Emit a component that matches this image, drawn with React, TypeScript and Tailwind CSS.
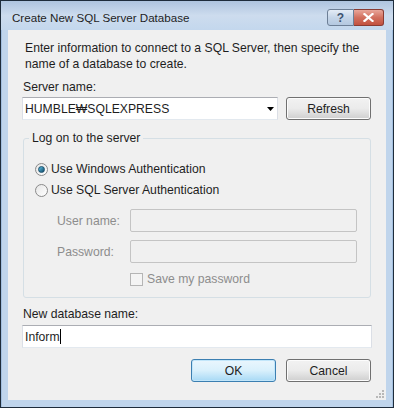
function WinButton({ label, primary }: { label: string; primary?: boolean }) {
  return (
    <button
      className={
        primary
          ? 'h-[23px] w-[85px] rounded-[3px] border border-[#3c7fb1] bg-gradient-to-b from-[#eaf6fd] via-[#d9f0fc] to-[#a7d9f5] text-[12.2px] text-[#1e1e1e] shadow-[inset_0_0_0_1px_#c2e6fa]'
          : 'h-[23px] w-[85px] rounded-[3px] border border-[#707070] bg-gradient-to-b from-[#f2f2f2] via-[#ebebeb] to-[#cfcfcf] text-[12.2px] text-[#1e1e1e] shadow-[inset_0_0_0_1px_#fcfcfc]'
      }
    >
      {label}
    </button>
  );
}

function Radio({ checked }: { checked?: boolean }) {
  return (
    <span className="flex h-[13px] w-[13px] items-center justify-center rounded-full border border-[#8a8a8a] bg-gradient-to-br from-[#e6e6e6] to-[#ffffff]">
      {checked && (
        <span className="h-[7px] w-[7px] rounded-full border border-[#1b4f6b] bg-gradient-to-br from-[#5ec2e8] to-[#0f4a68]" />
      )}
    </span>
  );
}

export default function App() {
  return (
    <div className="h-[408px] w-[394px] bg-[#1e2c3b] p-px font-['Liberation_Sans',sans-serif] text-[12.2px] leading-4 text-[#1e1e1e]">
      <div className="flex h-full flex-col bg-[#c0d5ec] px-[7px] pb-[7px] shadow-[inset_-1px_0_0_#a3bfdf,inset_1px_0_0_#a3bfdf]">
        {/* title bar */}
        <div className="-mx-[7px] flex h-[29px] items-start bg-gradient-to-b from-[#aec4df] via-[#cddcee] to-[#c3d7ed] px-[7px]">
          <span className="ml-[4px] mt-[9px] text-[11.6px] text-[#1e1e1e]">Create New SQL Server Database</span>
          <div className="ml-auto mr-[2px] mt-[8px] flex">
            <div className="flex h-[17px] w-[27px] items-center justify-center rounded-l-[3px] border border-[#6d7f96] bg-gradient-to-b from-[#e4ecf6] via-[#c5d5e8] to-[#b4c8e0] text-[12px] font-bold leading-none text-[#3d5370]">
              ?
            </div>
            <div className="flex h-[17px] w-[30px] items-center justify-center rounded-r-[3px] border border-l-0 border-[#8a3b32] bg-gradient-to-b from-[#e8a69a] via-[#d2705f] to-[#c2513f]">
              <svg width="11" height="9" viewBox="0 0 11 9">
                <path d="M1.5 1 L9.5 8 M9.5 1 L1.5 8" stroke="#ffffff" strokeWidth="2.2" strokeLinecap="square" />
              </svg>
            </div>
          </div>
        </div>

        {/* client */}
        <div className="relative flex flex-1 flex-col bg-[#f0f0f0] px-[14px] pt-[10px]">
          <p className="pl-[3px]">
            Enter information to connect to a SQL Server, then specify the
            <br />
            name of a database to create.
          </p>

          <div className="mt-[7px] pl-px">Server name:</div>
          <div className="mt-[2px] flex items-center gap-[8px]">
            <div className="flex h-[23px] w-[256px] items-center border border-[#abadb3] border-b-[#e3e9ef] border-x-[#dbdfe6] bg-white pl-[2px] pr-[3px]">
              <span>HUMBLE₩SQLEXPRESS</span>
              <svg className="ml-auto" width="7" height="4" viewBox="0 0 7 4">
                <path d="M0 0 H7 L3.5 4 Z" fill="#000" />
              </svg>
            </div>
            <WinButton label="Refresh" />
          </div>

          <fieldset className="mx-px mt-[10px] rounded-[3px] border border-[#d5dfe5]">
            <legend className="ml-[5px] px-[3px]">Log on to the server</legend>
            <div className="flex flex-col pb-[10px] pl-[11px] pr-[13px] pt-[15px]">
              <label className="flex items-center gap-[2px]">
                <Radio checked />
                <span className="ml-[1px]">Use Windows Authentication</span>
              </label>
              <label className="mt-[5px] flex items-center gap-[2px]">
                <Radio />
                <span className="ml-[1px]">Use SQL Server Authentication</span>
              </label>
              <div className="mt-[11px] flex items-center pl-[22px]">
                <span className="w-[73px] text-[#8d8d8d]">User name:</span>
                <div className="h-[23px] flex-1 rounded-[2px] border border-[#c4c4c4] bg-[#f0f0f0]" />
              </div>
              <div className="mt-[8px] flex items-center pl-[22px]">
                <span className="w-[73px] text-[#8d8d8d]">Password:</span>
                <div className="h-[23px] flex-1 rounded-[2px] border border-[#c4c4c4] bg-[#f0f0f0]" />
              </div>
              <div className="mt-[8px] flex items-center pl-[95px]">
                <span className="h-[13px] w-[13px] border border-[#b5b5b5] bg-[#f4f4f4]" />
                <span className="ml-[4px] text-[#8d8d8d]">Save my password</span>
              </div>
            </div>
          </fieldset>

          <div className="mt-[8px] pl-px">New database name:</div>
          <div className="mt-[3px] flex h-[23px] items-center border border-[#abadb3] border-b-[#e3e9ef] border-x-[#dbdfe6] bg-white pl-[2px]">
            <span>Inform</span>
            <span className="h-[15px] w-px bg-black" />
          </div>

          <div className="mt-[11px] flex justify-end gap-[10px] pr-px">
            <WinButton label="OK" primary />
            <WinButton label="Cancel" />
          </div>

          <svg className="absolute bottom-[2px] right-[2px]" width="8" height="8" viewBox="0 0 8 8">
            {[
              [6, 0],
              [6, 3],
              [3, 3],
              [6, 6],
              [3, 6],
              [0, 6],
            ].map(([x, y]) => (
              <rect key={`${x}-${y}`} x={x} y={y} width="2" height="2" fill="#b8b8b8" />
            ))}
          </svg>
        </div>
      </div>
    </div>
  );
}
